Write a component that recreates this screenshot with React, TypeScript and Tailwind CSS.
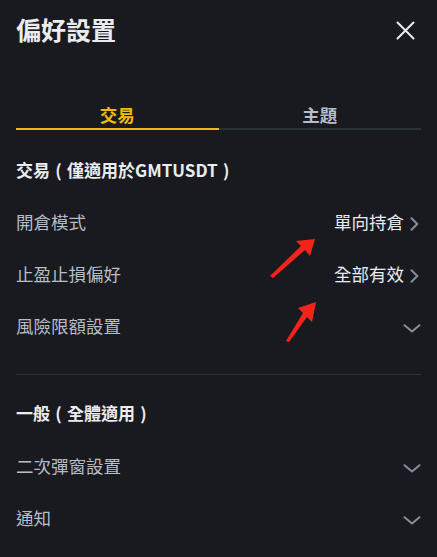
import React from "react";

const font = { fontFamily: '"Noto Sans CJK TC", "Noto Sans", sans-serif' };

function ChevronRight() {
  return (
    <svg width="9" height="14" viewBox="0 0 9 14" fill="none">
      <path d="M1.5 1.3 L7.3 7 L1.5 12.7" stroke="#848e9c" strokeWidth="2" strokeLinecap="round" strokeLinejoin="round" />
    </svg>
  );
}

function ChevronDown() {
  return (
    <svg width="18" height="9" viewBox="0 0 18 9" fill="none">
      <path d="M1.5 1.2 L9 7.6 L16.5 1.2" stroke="#848e9c" strokeWidth="2" strokeLinecap="round" strokeLinejoin="round" />
    </svg>
  );
}

function Paren({ c }: { c: string }) {
  return <span className="inline-block w-[17px] text-center">{c}</span>;
}

function Row({ label, value }: { label: string; value?: string }) {
  return (
    <div className="flex h-[52px] items-center justify-between">
      <span className="text-[17.5px] leading-[24px] text-[#b7bdc6]">{label}</span>
      {value ? (
        <div className="flex items-center gap-[6px]">
          <span className="text-[17.5px] leading-[24px] text-[#eaecef]">{value}</span>
          <span className="mr-[2px] mt-[3px]"><ChevronRight /></span>
        </div>
      ) : (
        <span className="mt-[4px]"><ChevronDown /></span>
      )}
    </div>
  );
}

export default function App() {
  return (
    <div className="relative h-[557px] w-full overflow-hidden bg-[#181a20] px-4" style={font}>
      <div className="flex h-[58px] items-center justify-between">
        <span className="text-[25px] font-bold leading-[32px] text-[#eaecef]">偏好設置</span>
        <svg className="mr-[6px] mt-[2px]" width="19" height="19" viewBox="0 0 19 19" fill="none">
          <path d="M1.5 1.5 L17.5 17.5 M17.5 1.5 L1.5 17.5" stroke="#eaecef" strokeWidth="2" strokeLinecap="round" />
        </svg>
      </div>

      <div className="mt-[38px] flex">
        <div className="flex-1 border-b-2 border-[#f0b90b] pt-[6px] text-center text-[17.5px] font-bold leading-[26px] text-[#f0b90b]">交易</div>
        <div className="flex-1 border-b-2 border-[#2b3139] pt-[6px] text-center text-[17.5px] font-bold leading-[26px] text-[#b7bdc6]">主題</div>
      </div>

      <div className="mt-[28px] text-[17px] font-bold leading-[24px] text-[#eaecef]">
        交易<Paren c="(" />僅適用於GMTUSDT<Paren c=")" />
      </div>
      <div className="mt-[14px] flex flex-col">
        <Row label="開倉模式" value="單向持倉" />
        <Row label="止盈止損偏好" value="全部有效" />
        <Row label="風險限額設置" />
      </div>

      <div className="mt-[22px] h-px bg-[#2b3139]" />

      <div className="mt-[26px] text-[17px] font-bold leading-[24px] text-[#eaecef]">
        一般<Paren c="(" />全體適用<Paren c=")" />
      </div>
      <div className="mt-[15px] flex flex-col">
        <Row label="二次彈窗設置" />
        <Row label="通知" />
      </div>

      <svg className="pointer-events-none absolute left-0 top-0" width="437" height="557" viewBox="0 0 437 557">
        <polygon points="270,276 301,246 296,241 315,239 310,256 305,250 273,278" fill="#f5241a" />
        <polygon points="286,341 303,313 298,308 316,302 312,322 307,317 289,342" fill="#f5241a" />
      </svg>
    </div>
  );
}
